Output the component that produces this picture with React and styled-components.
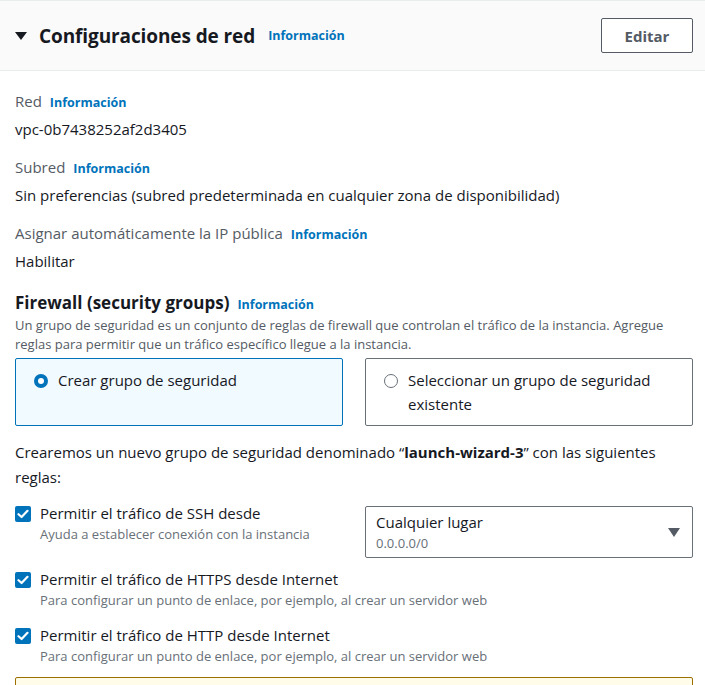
import React from "react";
import styled, { createGlobalStyle } from "styled-components";

const GlobalStyle = createGlobalStyle`
  body {
    margin: 0;
    background: #ffffff;
    font-family: "Open Sans", "Noto Sans", sans-serif;
    color: #16191f;
  }
`;

const Panel = styled.div`
  width: 705px;
  height: 685px;
  overflow: hidden;
  border-top: 1px solid #eaeded;
  box-sizing: border-box;
`;

const Header = styled.div`
  display: flex;
  align-items: center;
  height: 69px;
  padding: 0 12px 0 15px;
  background: #fafafa;
  border-bottom: 1px solid #eaeded;
`;

const Caret = styled.span`
  width: 0;
  height: 0;
  border-left: 6px solid transparent;
  border-right: 6px solid transparent;
  border-top: 8px solid #16191f;
  margin: 1px 12px 0 0;
`;

const Title = styled.h2`
  margin: 0;
  font-size: 19px;
  font-weight: 700;
  letter-spacing: -0.1px;
`;

const Info = styled.a`
  color: #0073bb;
  font-size: 12.5px;
  font-weight: 700;
  line-height: 18px;
  margin-left: ${(p) => p.gap || 8}px;
  text-decoration: none;
`;

const EditButton = styled.button`
  margin-left: auto;
  width: 92px;
  height: 35px;
  background: #ffffff;
  border: 1px solid #545b64;
  border-radius: 2px;
  color: #545b64;
  font-family: inherit;
  font-size: 15px;
  font-weight: 700;
`;

const Body = styled.div`
  display: flex;
  flex-direction: column;
  padding: 19px 12px 0 15px;
`;

const Field = styled.div`
  display: flex;
  flex-direction: column;
  margin-bottom: 16px;
`;

const Label = styled.div`
  display: flex;
  align-items: baseline;
  height: 22px;
  font-size: 15px;
  color: #545b64;
  line-height: 22px;
`;

const Value = styled.div`
  font-size: 15px;
  line-height: 22px;
  margin-top: 6px;
`;

const SectionTitle = styled.div`
  display: flex;
  align-items: baseline;
  height: 22px;
  font-size: 17px;
  font-weight: 700;
  line-height: 22px;
  margin-top: 4px;
`;

const Description = styled.p`
  margin: 2px 0 0;
  font-size: 13px;
  line-height: 19px;
  color: #545b64;
`;

const Tiles = styled.div`
  display: grid;
  grid-template-columns: 1fr 1fr;
  gap: 22px;
  margin-top: 4px;
`;

const Tile = styled.div`
  display: flex;
  align-items: flex-start;
  height: 68px;
  box-sizing: border-box;
  padding: 9px 16px 0 18px;
  border: 1px solid ${(p) => (p.selected ? "#0073bb" : "#687078")};
  background: ${(p) => (p.selected ? "#f1faff" : "#ffffff")};
  border-radius: 2px;
  font-size: 15px;
  line-height: 24px;
`;

const Radio = styled.span`
  flex: none;
  width: 14px;
  height: 14px;
  box-sizing: border-box;
  border-radius: 50%;
  border: ${(p) => (p.checked ? "4px solid #0073bb" : "1.5px solid #687078")};
  background: #ffffff;
  margin: 6px 10px 0 0;
`;

const Notice = styled.p`
  margin: 14px 0 0;
  font-size: 15px;
  line-height: 25px;
`;

const Strong = styled.span`
  font-weight: 700;
`;

const RuleRow = styled.div`
  display: flex;
  align-items: flex-start;
  margin-top: ${(p) => p.top}px;
`;

const Check = styled.span`
  flex: none;
  width: 16px;
  height: 16px;
  border-radius: 2px;
  background: #0073bb;
  display: flex;
  align-items: center;
  justify-content: center;
  margin: 4px 9px 0 0;
`;

const RuleText = styled.div`
  display: flex;
  flex-direction: column;
  width: 316px;
  flex: ${(p) => (p.grow ? "1" : "none")};
`;

const RuleLabel = styled.div`
  font-size: 15px;
  line-height: 22px;
`;

const RuleHint = styled.div`
  font-size: 13px;
  line-height: 20px;
  color: #687078;
`;

const Select = styled.div`
  margin: 4px 0 0 auto;
  width: 328px;
  height: 52px;
  box-sizing: border-box;
  border: 1px solid #687078;
  border-radius: 2px;
  padding: 4px 12px 0 10px;
  display: flex;
  align-items: center;
`;

const SelectText = styled.div`
  display: flex;
  flex-direction: column;
  flex: 1;
  align-self: flex-start;
`;

const SelectMain = styled.div`
  font-size: 15px;
  line-height: 22px;
`;

const SelectSub = styled.div`
  font-size: 13px;
  line-height: 20px;
  color: #687078;
`;

const DropCaret = styled.span`
  width: 0;
  height: 0;
  border-left: 6px solid transparent;
  border-right: 6px solid transparent;
  border-top: 9px solid #545b64;
  margin-top: -3px;
`;

const Warning = styled.div`
  margin-top: 11px;
  height: 40px;
  flex: none;
  border: 1px solid #9c6f00;
  background: #fffce9;
  border-radius: 2px;
`;

const Tick = () => (
  <svg width="12" height="10" viewBox="0 0 12 10">
    <path d="M1.5 5.2 L4.6 8 L10.5 1.8" fill="none" stroke="#ffffff" strokeWidth="2.2" strokeLinecap="round" strokeLinejoin="round" />
  </svg>
);

const rules = [
  { label: "Permitir el tráfico de HTTPS desde Internet", hint: "Para configurar un punto de enlace, por ejemplo, al crear un servidor web", top: 10 },
  { label: "Permitir el tráfico de HTTP desde Internet", hint: "Para configurar un punto de enlace, por ejemplo, al crear un servidor web", top: 14 },
];

export default function App() {
  return (
    <>
      <GlobalStyle />
      <Panel>
        <Header>
          <Caret />
          <Title>Configuraciones de red</Title>
          <Info gap={13}>Información</Info>
          <EditButton>Editar</EditButton>
        </Header>
        <Body>
          <Field>
            <Label>Red<Info>Información</Info></Label>
            <Value>vpc-0b7438252af2d3405</Value>
          </Field>
          <Field>
            <Label>Subred<Info>Información</Info></Label>
            <Value>Sin preferencias (subred predeterminada en cualquier zona de disponibilidad)</Value>
          </Field>
          <Field>
            <Label>Asignar automáticamente la IP pública<Info>Información</Info></Label>
            <Value>Habilitar</Value>
          </Field>
          <SectionTitle>Firewall (security groups)<Info>Información</Info></SectionTitle>
          <Description>
            Un grupo de seguridad es un conjunto de reglas de firewall que controlan el tráfico de la instancia. Agregue
            reglas para permitir que un tráfico específico llegue a la instancia.
          </Description>
          <Tiles>
            <Tile selected>
              <Radio checked />
              Crear grupo de seguridad
            </Tile>
            <Tile>
              <Radio />
              <span>Seleccionar un grupo de seguridad existente</span>
            </Tile>
          </Tiles>
          <Notice>
            <span>Crearemos un nuevo grupo de seguridad denominado “</span>
            <Strong>launch-wizard-3</Strong>
            <span>” con las siguientes</span> <span>reglas:</span>
          </Notice>
          <RuleRow top={12}>
            <Check><Tick /></Check>
            <RuleText>
              <RuleLabel>Permitir el tráfico de SSH desde</RuleLabel>
              <RuleHint>Ayuda a establecer conexión con la instancia</RuleHint>
            </RuleText>
            <Select>
              <SelectText>
                <SelectMain>Cualquier lugar</SelectMain>
                <SelectSub>0.0.0.0/0</SelectSub>
              </SelectText>
              <DropCaret />
            </Select>
          </RuleRow>
          {rules.map((r) => (
            <RuleRow key={r.label} top={r.top}>
              <Check><Tick /></Check>
              <RuleText grow>
                <RuleLabel>{r.label}</RuleLabel>
                <RuleHint>{r.hint}</RuleHint>
              </RuleText>
            </RuleRow>
          ))}
          <Warning />
        </Body>
      </Panel>
    </>
  );
}
